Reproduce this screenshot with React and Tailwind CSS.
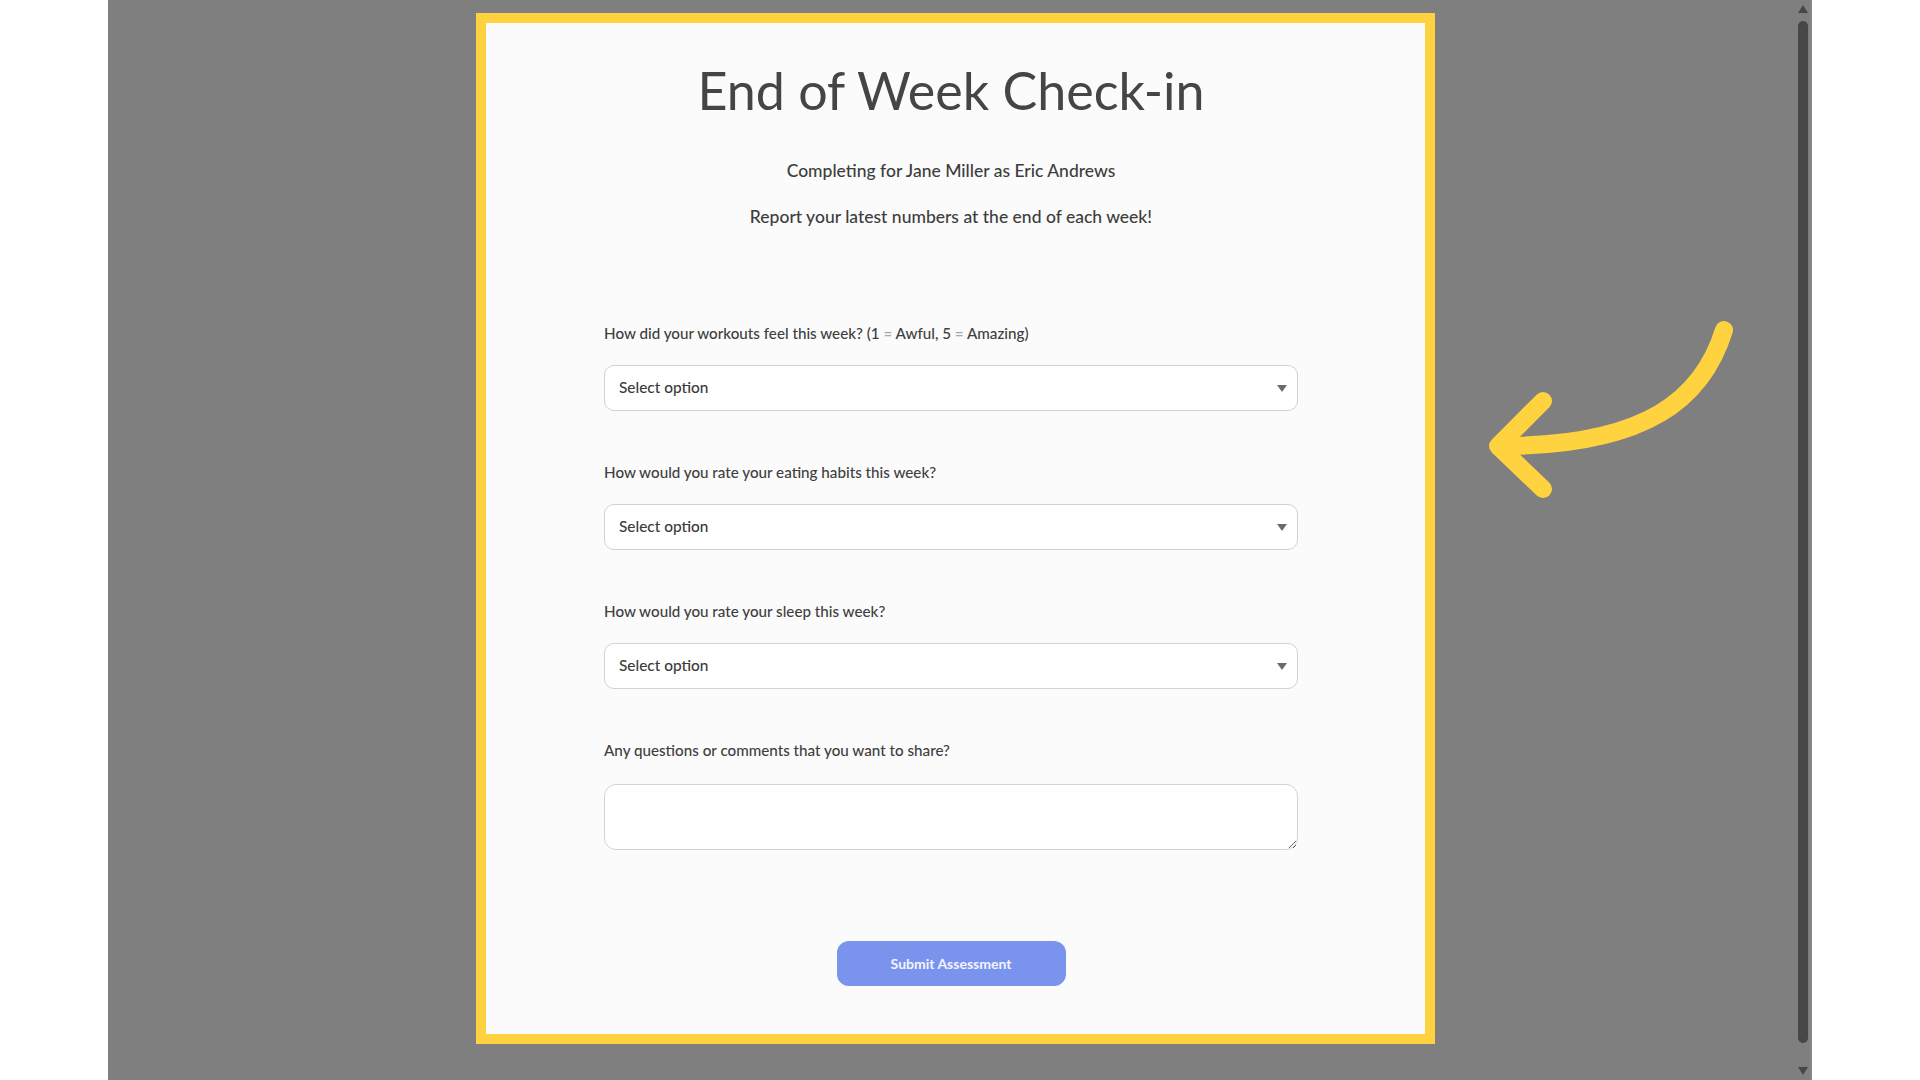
import React from 'react';

const font = { fontFamily: 'Lato, "Noto Sans", sans-serif' };

const Eq = () => <span className="text-[#a8a8a8]">=</span>;

const SelectField = () => (
  <div className="flex h-[46px] w-full items-center justify-between rounded-[10px] border border-[#d2d2d2] bg-white pl-[14px] pr-[10px]">
    <span className="text-[15.4px] font-medium text-[#3b3b3b]">Select option</span>
    <svg width="10" height="7" viewBox="0 0 10 7">
      <path d="M0 0 L10 0 L5 7 Z" fill="#6b6b6b" />
    </svg>
  </div>
);

const Question = ({ label, children, className = '' }) => (
  <div className={`flex flex-col ${className}`}>
    <label className="h-[20px] text-[15.2px] font-medium leading-[20px] text-[#404040]">{label}</label>
    <div className="mt-[22px]">{children}</div>
  </div>
);

const Scrollbar = () => (
  <div className="flex w-[17px] flex-col items-center border-r-2 border-[#868686] pb-[5px] pt-[5px]">
    <svg width="10" height="8" viewBox="0 0 10 8">
      <path d="M0 8 L10 8 L5 0 Z" fill="#474747" />
    </svg>
    <div className="mt-[8px] w-[10px] flex-1 rounded-full bg-[#474747]" />
    <svg className="mt-[24px]" width="10" height="8" viewBox="0 0 10 8">
      <path d="M0 0 L10 0 L5 8 Z" fill="#474747" />
    </svg>
  </div>
);

export default function App() {
  return (
    <div className="flex h-[1080px] w-[1920px] overflow-hidden bg-white" style={font}>
      <div className="w-[108px] shrink-0 bg-white" />

      <div className="relative flex w-[1704px] shrink-0 bg-[#7f7f7f]">
        <div className="flex-1 pl-[368px] pt-[13px]">
          <div className="w-[959px] border-[10px] border-[#ffd23f] bg-[#fbfbfb]">
            <div className="ml-[118px] flex w-[694px] flex-col pb-[48px] pt-[35px]">
              <h1 className="text-center text-[52px] font-normal leading-[64px] text-[#454545]">
                End of Week Check-in
              </h1>
              <p className="mt-[37px] text-center text-[17.5px] font-medium leading-[24px] text-[#3d3d3d]">
                Completing for Jane Miller as Eric Andrews
              </p>
              <p className="mt-[22px] text-center text-[17.5px] font-medium leading-[24px] text-[#3d3d3d]">
                Report your latest numbers at the end of each week!
              </p>

              <Question
                className="mt-[94px]"
                label={
                  <>
                    How did your workouts feel this week? (1 <Eq /> Awful, 5 <Eq /> Amazing)
                  </>
                }
              >
                <SelectField />
              </Question>

              <Question className="mt-[51px]" label="How would you rate your eating habits this week?">
                <SelectField />
              </Question>

              <Question className="mt-[51px]" label="How would you rate your sleep this week?">
                <SelectField />
              </Question>

              <div className="mt-[51px] flex flex-col">
                <label className="h-[20px] text-[15.2px] font-medium leading-[20px] text-[#404040]">
                  Any questions or comments that you want to share?
                </label>
                <textarea className="mt-[24px] block h-[66px] w-full rounded-[12px] border border-[#d4d4d4] bg-white px-[14px] py-[10px] text-[14px] outline-none" />
              </div>

              <div className="mt-[91px] flex justify-center">
                <button className="h-[45px] w-[229px] rounded-[12px] bg-[#7a93ec] text-[14px] font-bold text-[#f3f5ff]">
                  Submit Assessment
                </button>
              </div>
            </div>
          </div>
        </div>

        <Scrollbar />

        <svg
          className="pointer-events-none absolute left-[1372px] top-[297px]"
          width="280"
          height="213"
          viewBox="1480 297 280 213"
        >
          <path
            d="M1724 330 C1703 398 1648 446 1500 446"
            fill="none"
            stroke="#ffd23f"
            strokeWidth="18"
            strokeLinecap="round"
          />
          <path
            d="M1543 401 L1498 446 L1543 489"
            fill="none"
            stroke="#ffd23f"
            strokeWidth="18"
            strokeLinecap="round"
            strokeLinejoin="round"
          />
        </svg>
      </div>

      <div className="flex-1 bg-white" />
    </div>
  );
}
